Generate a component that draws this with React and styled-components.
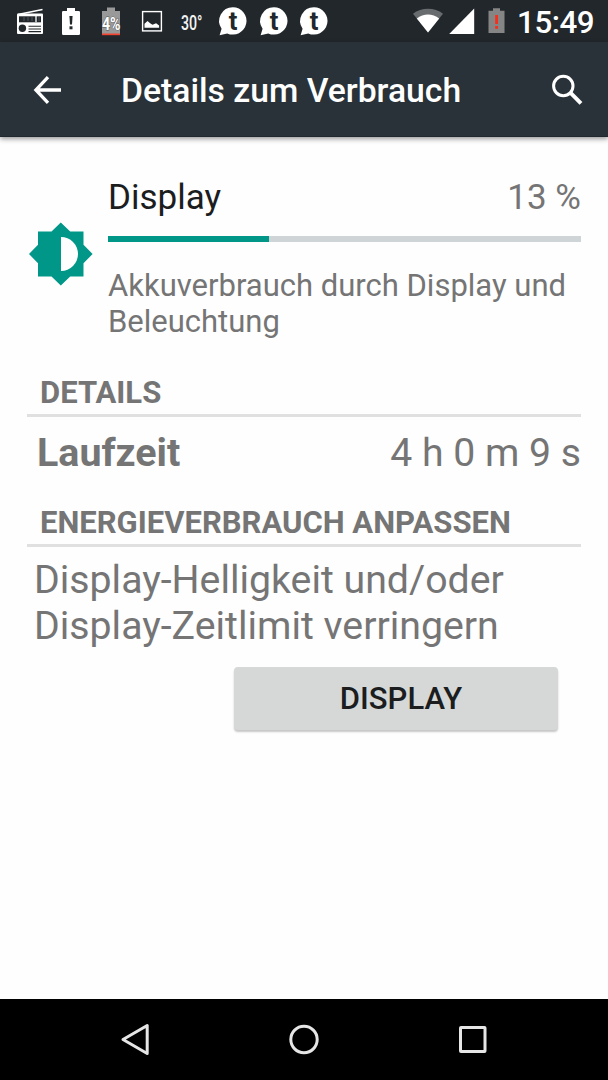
import React from 'react';
import styled, { createGlobalStyle } from 'styled-components';

const GlobalStyle = createGlobalStyle`
  * {
    box-sizing: border-box;
  }
  body {
    margin: 0;
    background: #fefefe;
    font-family: Roboto, sans-serif;
  }
`;

const Screen = styled.div`
  display: flex;
  flex-direction: column;
  width: 608px;
  height: 1080px;
  background: #fefefe;
  color: #757575;
  overflow: hidden;
`;

const StatusBar = styled.div`
  display: flex;
  flex: none;
  align-items: center;
  justify-content: space-between;
  height: 42px;
  padding: 0 14px 0 10px;
  background: #22272b;
`;

const StatusGroup = styled.div`
  display: flex;
  align-items: center;
  height: 42px;
`;

const StatusSlot = styled.div`
  display: flex;
  justify-content: center;
  width: ${(props) => props.$width || 40.5}px;
  height: 42px;

  svg {
    display: block;
    flex: none;
    overflow: visible;
  }
`;

const Clock = styled.div`
  margin-left: 3px;
  padding-top: 3px;
  font-size: 31.3px;
  font-weight: 500;
  letter-spacing: -0.5px;
  line-height: 38px;
  color: #fff;
`;

const AppBar = styled.header`
  display: flex;
  flex: none;
  align-items: center;
  height: 95px;
  padding: 0 24px 0 32px;
  background: #283238;
  border-bottom: 1px solid #1f292f;
  box-shadow: 0 2px 5px rgba(0, 0, 0, 0.4);
`;

const IconButton = styled.button`
  display: flex;
  padding: 1px 0 0;
  border: none;
  background: none;
`;

const Title = styled.h1`
  flex: 1;
  margin: 4px 0 0 59px;
  font-size: 33.7px;
  font-weight: 500;
  line-height: 40px;
  color: #fff;
`;

const Content = styled.main`
  flex: 1;
  padding: 38px 27px 0;
`;

const Summary = styled.section`
  display: flex;
  align-items: center;
  gap: 14px;
`;

const IconBox = styled.div`
  display: flex;
  padding-bottom: 7px;
`;

const SummaryBody = styled.div`
  flex: 1;
`;

const Row = styled.div`
  display: flex;
  align-items: center;
  justify-content: space-between;
`;

const Name = styled.span`
  font-size: 35px;
  line-height: 46px;
  color: #1b1d1e;
`;

const Percent = styled.span`
  font-size: 35px;
  line-height: 46px;
`;

const Track = styled.div`
  height: 6px;
  margin-top: 15px;
  background: #cfd5d7;
`;

const Fill = styled.div`
  height: 100%;
  background: #009688;
`;

const Description = styled.p`
  margin: 26px 0 0;
  font-size: 31px;
  line-height: 36px;
`;

const SectionTitle = styled.h2`
  margin: ${(props) => props.$top}px 0 0;
  padding: 0 0 1px 13px;
  border-bottom: 3px solid #e0e0e0;
  font-size: 31px;
  font-weight: 700;
  line-height: 40px;
`;

const DetailRow = styled(Row)`
  padding: 13px 0 0 10px;
  font-size: 39.2px;
  line-height: 46px;
`;

const DetailLabel = styled.span`
  font-size: 39.4px;
  font-weight: 700;
`;

const Hint = styled.p`
  margin: 10px 0 0;
  padding-left: 7px;
  font-size: 39.25px;
  line-height: 46px;
`;

const ActionButton = styled.button`
  display: block;
  width: 324px;
  height: 63px;
  margin: 18px 23px 0 auto;
  padding: 0 0 0 10px;
  border: none;
  border-radius: 4px;
  background: #d6d8d8;
  box-shadow: 0 2px 2px rgba(0, 0, 0, 0.22);
  font-family: inherit;
  font-size: 31px;
  font-weight: 500;
  color: #1b1d1e;
`;

const NavBar = styled.nav`
  display: flex;
  flex: none;
  align-items: center;
  justify-content: center;
  gap: 128px;
  height: 81px;
  background: #000;
`;

const RadioIcon = () => (
  <svg width="28" height="42" viewBox="0 0 28 42">
    <path d="M2 14.5 26.5 9.5" stroke="#fff" strokeWidth="1.5" />
    <rect x="1" y="13.5" width="26" height="20.5" rx="1" fill="#fff" />
    <rect x="3" y="16.3" width="22" height="6" fill="#22272b" />
    <path d="M8 17v4M12 17v4M16 17v4M23 17v4" stroke="#59616a" strokeWidth="0.8" />
    <path d="M20 16v6" stroke="#fff" strokeWidth="1.3" />
    <circle cx="6.4" cy="28.3" r="3.7" fill="#22272b" />
    <path d="M12.5 26.2H25M12.5 29H25M12.5 31.6H25" stroke="#22272b" strokeWidth="1.1" />
  </svg>
);

const AlertBatteryIcon = () => (
  <svg width="18" height="42" viewBox="0 0 18 42">
    <path d="M5 8h8v3h3.7q1.3 0 1.3 1.3V33.7q0 1.3-1.3 1.3H1.3Q0 35 0 33.7V12.3Q0 11 1.3 11H5z" fill="#fff" />
    <path d="M7.4 16h3.2l-.6 8.5H8z" fill="#22272b" />
    <rect x="7.5" y="26.3" width="3" height="3" fill="#22272b" />
  </svg>
);

const PercentBatteryIcon = () => (
  <svg width="28" height="42" viewBox="0 0 28 42">
    <path d="M10 7.5h8V11h5V34H5V11h5z" fill="#999" />
    <rect x="5" y="33.5" width="18" height="1.7" fill="#f4442e" />
    <text x="5" y="29.7" textLength="18.5" lengthAdjust="spacingAndGlyphs" fontSize="18.5" fontWeight="700" fill="#fff" stroke="#555" strokeWidth="1" paintOrder="stroke">
      4%
    </text>
  </svg>
);

const PictureIcon = () => (
  <svg width="22" height="42" viewBox="0 0 22 42">
    <rect x="1.6" y="11.6" width="18.8" height="19.3" fill="none" stroke="#fff" strokeWidth="1.4" />
    <path d="M3.5 27.8v-4l3-2.7 3 2.3 2 1.4 3.6-1.5 3 2.2v2.3z" fill="#fff" />
  </svg>
);

const TemperatureIcon = () => (
  <svg width="32" height="42" viewBox="0 0 32 42">
    <text x="5" y="29.8" textLength="21.5" lengthAdjust="spacingAndGlyphs" fontSize="21" fontWeight="500" fill="#f4f4f4">
      30°
    </text>
  </svg>
);

const TalkIcon = () => (
  <svg width="28" height="42" viewBox="0 0 28 42">
    <path d="M14 7.2a13.7 13.7 0 1 1-5.8 26.2L.6 35.3l2-6.6A13.7 13.7 0 0 1 14 7.2z" fill="#fff" />
    <text x="14" y="29.6" textAnchor="middle" fontSize="25.5" fontWeight="700" fill="#22272b">
      t
    </text>
  </svg>
);

const WifiIcon = () => (
  <svg width="30" height="42" viewBox="0 0 30 42">
    <path d="M15 32.5 0 13.8Q6.5 8.8 15 8.8t15 5z" fill="#686c6f" />
    <path d="M15 32.5 3.8 18.5Q9 14.6 15 14.6t11.2 3.9z" fill="#fff" />
  </svg>
);

const SignalIcon = () => (
  <svg width="26" height="42" viewBox="0 0 26 42">
    <path d="M25.2 8.5V34H.2z" fill="#fff" />
  </svg>
);

const LowBatteryIcon = () => (
  <svg width="18" height="42" viewBox="0 0 18 42">
    <path d="M5 8.3h7v2.5h4.5V33H.5V10.8H5z" fill="#858585" />
    <path d="M7.2 15h2.8v9H7.2zM7.2 26h2.8v2.7H7.2z" fill="#f4301c" />
  </svg>
);

const BackIcon = () => (
  <svg width="30" height="30" viewBox="0 0 30 30">
    <path d="M29 15H4M16 2.2 3.9 15 16 27.8" fill="none" stroke="#fff" strokeWidth="3.3" />
  </svg>
);

const SearchIcon = () => (
  <svg width="32" height="32" viewBox="0 0 32 32">
    <circle cx="11.3" cy="12" r="9.7" fill="none" stroke="#fff" strokeWidth="3" />
    <path d="M18.3 18.7 29 29.3" fill="none" stroke="#fff" strokeWidth="4" />
  </svg>
);

const BrightnessIcon = () => (
  <svg width="67" height="64" viewBox="0 0 67 64">
    <path
      d="M33.8.4 43.2 9.5H56.5V22.7L65.6 32 56.5 41.3V54.5H43.2L33.8 63.6 24.5 54.5H11V41.3L2 32l9-9.3V9.5H24.5z"
      fill="#009688"
    />
    <path d="M34 15a17 17 0 0 1 0 34z" fill="#fefefe" />
  </svg>
);

const App = () => {
  const share = 34;

  return (
    <>
      <GlobalStyle />
      <Screen>
        <StatusBar>
          <StatusGroup>
            <StatusSlot><RadioIcon /></StatusSlot>
            <StatusSlot><AlertBatteryIcon /></StatusSlot>
            <StatusSlot><PercentBatteryIcon /></StatusSlot>
            <StatusSlot><PictureIcon /></StatusSlot>
            <StatusSlot $width={39}><TemperatureIcon /></StatusSlot>
            <StatusSlot $width={43}><TalkIcon /></StatusSlot>
            <StatusSlot $width={39}><TalkIcon /></StatusSlot>
            <StatusSlot $width={42}><TalkIcon /></StatusSlot>
          </StatusGroup>
          <StatusGroup>
            <StatusSlot $width={34.5}><WifiIcon /></StatusSlot>
            <StatusSlot $width={34.5}><SignalIcon /></StatusSlot>
            <StatusSlot $width={34.5}><LowBatteryIcon /></StatusSlot>
            <Clock>15:49</Clock>
          </StatusGroup>
        </StatusBar>
        <AppBar>
          <IconButton aria-label="Zurück"><BackIcon /></IconButton>
          <Title>Details zum Verbrauch</Title>
          <IconButton aria-label="Suchen"><SearchIcon /></IconButton>
        </AppBar>
        <Content>
          <Summary>
            <IconBox>
              <BrightnessIcon />
            </IconBox>
            <SummaryBody>
              <Row>
                <Name>Display</Name>
                <Percent>13 %</Percent>
              </Row>
              <Track>
                <Fill style={{ width: `${share}%` }} />
              </Track>
              <Description>Akkuverbrauch durch Display und Beleuchtung</Description>
            </SummaryBody>
          </Summary>
          <SectionTitle $top={33}>DETAILS</SectionTitle>
          <DetailRow>
            <DetailLabel>Laufzeit</DetailLabel>
            <span>4 h 0 m 9 s</span>
          </DetailRow>
          <SectionTitle $top={27}>ENERGIEVERBRAUCH ANPASSEN</SectionTitle>
          <Hint>Display-Helligkeit und/oder Display-Zeitlimit verringern</Hint>
          <ActionButton>DISPLAY</ActionButton>
        </Content>
        <NavBar>
          <svg width="41" height="41" viewBox="0 0 41 41">
            <path d="M32.2 6.5v28L8 20.5z" fill="none" stroke="#e6e6e6" strokeWidth="3" strokeLinejoin="round" />
          </svg>
          <svg width="41" height="41" viewBox="0 0 41 41">
            <circle cx="20" cy="20.5" r="13.2" fill="none" stroke="#e6e6e6" strokeWidth="3" />
          </svg>
          <svg width="41" height="41" viewBox="0 0 41 41">
            <rect x="7.5" y="8.5" width="24.5" height="24" rx="0.5" fill="none" stroke="#e6e6e6" strokeWidth="3" />
          </svg>
        </NavBar>
      </Screen>
    </>
  );
};

export default App;
